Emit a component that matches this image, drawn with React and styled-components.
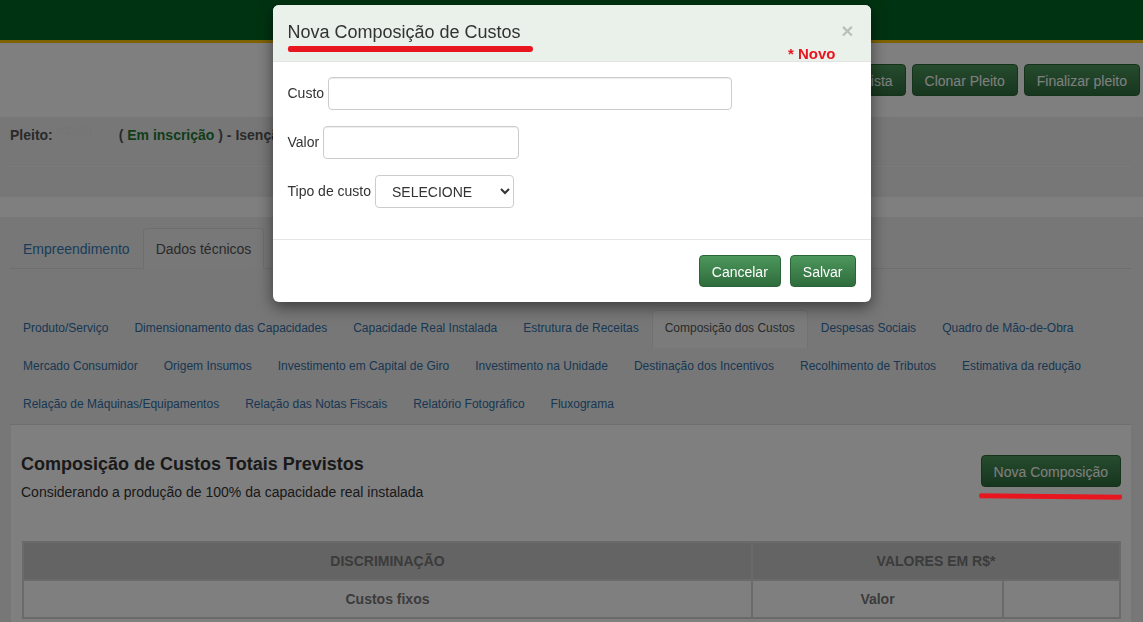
import React from 'react';
import styled, { createGlobalStyle } from 'styled-components';

const GlobalStyle = createGlobalStyle`
  html, body {
    margin: 0;
    padding: 0;
    background: #fff;
  }
  body {
    font-family: "Liberation Sans", Arial, sans-serif;
    font-size: 14px;
    color: #333;
  }
  * { box-sizing: border-box; }
`;

const topTabs = [
  'Empreendimento',
  'Dados técnicos',
  'Informações gerais',
  'Documentação',
  'Análise técnica',
  'Pendências',
  'Finalização',
];

const subTabRows = [
  ['Produto/Serviço', 'Dimensionamento das Capacidades', 'Capacidade Real Instalada', 'Estrutura de Receitas', 'Composição dos Custos', 'Despesas Sociais', 'Quadro de Mão-de-Obra'],
  ['Mercado Consumidor', 'Origem Insumos', 'Investimento em Capital de Giro', 'Investimento na Unidade', 'Destinação dos Incentivos', 'Recolhimento de Tributos', 'Estimativa da redução'],
  ['Relação de Máquinas/Equipamentos', 'Relação das Notas Fiscais', 'Relatório Fotográfico', 'Fluxograma'],
];

function App() {
  return (
    <>
      <GlobalStyle />
      <Page>
        <TopBar />
        <ActionBar>
          <GreenButton>Voltar para a lista</GreenButton>
          <GreenButton>Clonar Pleito</GreenButton>
          <GreenButton>Finalizar pleito</GreenButton>
        </ActionBar>

        <InfoBand>
          <InfoRow>
            <InfoText>
              Pleito: <Redacted>0000/21</Redacted>( <Status>Em inscrição</Status> ) - Isenção
            </InfoText>
          </InfoRow>
        </InfoBand>

        <Panel>
          <Tabs>
            {topTabs.map((t) => (
              <Tab key={t} $active={t === 'Dados técnicos'}>{t}</Tab>
            ))}
          </Tabs>

          <SubTabs>
            {subTabRows.map((row, i) => (
              <SubTabRow key={i}>
                {row.map((t) => (
                  <SubTab key={t} $active={t === 'Composição dos Custos'}>{t}</SubTab>
                ))}
              </SubTabRow>
            ))}
          </SubTabs>

          <Card>
            <CardHead>
              <div>
                <CardTitle>Composição de Custos Totais Previstos</CardTitle>
                <CardSubtitle>Considerando a produção de 100% da capacidade real instalada</CardSubtitle>
              </div>
              <ButtonWrap>
                <GreenButton>Nova Composição</GreenButton>
                <Scribble />
              </ButtonWrap>
            </CardHead>

            <CostTable>
              <tbody>
                <tr>
                  <HeadCell style={{ width: 729 }}>DISCRIMINAÇÃO</HeadCell>
                  <HeadCell colSpan={2}>VALORES EM R$*</HeadCell>
                </tr>
                <tr>
                  <Cell>Custos fixos</Cell>
                  <Cell style={{ width: 251 }}>Valor</Cell>
                  <Cell />
                </tr>
              </tbody>
            </CostTable>
          </Card>
        </Panel>
      </Page>

      <Backdrop />

      <ModalLayer>
        <Dialog>
          <DialogHeader>
            <DialogTitle>
              Nova Composição de Custos
              <TitleMark />
            </DialogTitle>
            <HeaderSide>
              <Close>×</Close>
              <NewTag>* Novo</NewTag>
            </HeaderSide>
          </DialogHeader>

          <DialogBody>
            <FormRow>
              <Label>Custo</Label>
              <Input $w={404} />
            </FormRow>
            <FormRow>
              <Label>Valor</Label>
              <Input $w={196} />
            </FormRow>
            <FormRow>
              <Label>Tipo de custo</Label>
              <Select defaultValue="">
                <option value="">SELECIONE</option>
                <option value="fixo">FIXO</option>
                <option value="variavel">VARIÁVEL</option>
              </Select>
            </FormRow>
          </DialogBody>

          <DialogFooter>
            <GreenButton>Cancelar</GreenButton>
            <GreenButton>Salvar</GreenButton>
          </DialogFooter>
        </Dialog>
      </ModalLayer>
    </>
  );
}

export default App;

const Page = styled.div`
  min-height: 622px;
  background: #fff;
`;

const TopBar = styled.div`
  height: 43px;
  background: #006622;
  border-bottom: 3px solid #ffc400;
`;

const ActionBar = styled.div`
  height: 74px;
  display: flex;
  justify-content: flex-end;
  align-items: flex-start;
  gap: 6px;
  padding: 21px 3px 0 0;
`;

const GreenButton = styled.button`
  height: 32px;
  padding: 6px 12px;
  font-family: "Liberation Sans", Arial, sans-serif;
  font-size: 14px;
  line-height: 20px;
  color: #fff;
  background: linear-gradient(#4c975b, #2f6c3d);
  border: 1px solid #2b6437;
  border-radius: 4px;
  cursor: pointer;
  white-space: nowrap;
`;

const InfoBand = styled.div`
  height: 80px;
  background: #eee;
  padding: 0 12px 0 10px;
`;

const InfoRow = styled.div`
  height: 50px;
  padding-top: 8px;
  border-bottom: 1px solid #f6f6f6;
`;

const InfoText = styled.div`
  line-height: 20px;
  font-weight: bold;
  color: #555;
  white-space: nowrap;
`;

const Redacted = styled.span`
  display: inline-block;
  width: 62px;
  color: #e9e9e9;
  font-weight: normal;
  font-size: 10px;
  vertical-align: top;
  line-height: 14px;
`;

const Status = styled.span`
  color: #1f7a35;
`;

const Panel = styled.div`
  margin-top: 20px;
  background: #eee;
  padding: 11px 12px 0 10px;
`;

const Tabs = styled.div`
  display: flex;
  border-bottom: 1px solid #ddd;
  height: 41px;
`;

const Tab = styled.div`
  padding: 10px 12px;
  line-height: 20px;
  height: 41px;
  font-size: 14px;
  color: ${(p) => (p.$active ? '#555' : '#337ab7')};
  background: ${(p) => (p.$active ? '#f0f0f0' : 'transparent')};
  border: 1px solid ${(p) => (p.$active ? '#ddd' : 'transparent')};
  border-bottom-color: transparent;
  border-radius: 4px 4px 0 0;
  white-space: nowrap;
`;

const SubTabs = styled.div`
  margin-top: 41px;
  border-bottom: 1px solid #ddd;
`;

const SubTabRow = styled.div`
  display: flex;
`;

const SubTab = styled.div`
  padding: 9px 12px 11px;
  line-height: 16px;
  height: 38px;
  font-size: 12px;
  color: ${(p) => (p.$active ? '#555' : '#2f6ea8')};
  background: ${(p) => (p.$active ? '#f6f6f6' : 'transparent')};
  border: 1px solid ${(p) => (p.$active ? '#e2e2e2' : 'transparent')};
  border-bottom-color: transparent;
  border-radius: 4px 4px 0 0;
  white-space: nowrap;
`;

const Card = styled.div`
  background: #fff;
  margin-left: 1px;
  padding: 29px 10px 10px;
  min-height: 200px;
`;

const CardHead = styled.div`
  display: flex;
  justify-content: space-between;
  align-items: flex-start;
`;

const CardTitle = styled.div`
  font-size: 18px;
  line-height: 20px;
  font-weight: bold;
  color: #333;
`;

const CardSubtitle = styled.div`
  margin-top: 8px;
  line-height: 20px;
  font-size: 14px;
  color: #333;
`;

const ButtonWrap = styled.div`
  display: flex;
  flex-direction: column;
  align-items: flex-end;
  margin-top: 1px;
`;

const Scribble = styled.div`
  position: relative;
  z-index: 1060;
  width: 143px;
  height: 5px;
  margin-top: 7px;
  margin-right: -1px;
  background: #e8161f;
  border-radius: 3px 2px 3px 4px;
  transform: rotate(0.6deg);
`;

const CostTable = styled.table`
  margin: 39px 0 0 1px;
  width: 1099px;
  border-collapse: collapse;
  border: 2px solid #d4d4d4;
`;

const HeadCell = styled.td`
  height: 38px;
  background: #c8c8c8;
  border: 2px solid #d4d4d4;
  text-align: center;
  font-weight: bold;
  color: #777;
  font-size: 14px;
`;

const Cell = styled.td`
  height: 38px;
  border: 2px solid #d4d4d4;
  text-align: center;
  font-weight: bold;
  color: #777;
  font-size: 14px;
`;

const Backdrop = styled.div`
  position: fixed;
  inset: 0;
  background: rgba(0, 0, 0, 0.5);
  z-index: 1040;
`;

const ModalLayer = styled.div`
  position: fixed;
  inset: 0;
  z-index: 1050;
`;

const Dialog = styled.div`
  width: 598px;
  margin: 5px auto 0;
  background: #fff;
  border-radius: 6px;
  box-shadow: 0 5px 15px rgba(0, 0, 0, 0.5);
  overflow: hidden;
`;

const DialogHeader = styled.div`
  display: flex;
  justify-content: space-between;
  height: 57px;
  padding: 0 17px 0 15px;
  background: #eaf0ea;
  border-bottom: 1px solid #e3e3e3;
`;

const DialogTitle = styled.div`
  position: relative;
  padding-top: 16px;
  font-size: 18px;
  line-height: 22px;
  color: #333;
`;

const TitleMark = styled.div`
  position: absolute;
  left: 0;
  top: 41px;
  width: 245px;
  height: 6px;
  background: #e8161f;
  border-radius: 3px 4px 4px 3px;
`;

const HeaderSide = styled.div`
  display: flex;
  flex-direction: column;
  align-items: flex-end;
  padding-top: 15px;
`;

const Close = styled.span`
  font-size: 21px;
  font-weight: bold;
  line-height: 1;
  color: #000;
  opacity: 0.2;
`;

const NewTag = styled.span`
  margin: 4px 18px 0 0;
  font-size: 15px;
  font-weight: bold;
  line-height: 18px;
  color: #e8161f;
`;

const DialogBody = styled.div`
  padding: 15px 15px 15px;
`;

const FormRow = styled.div`
  display: flex;
  align-items: center;
  gap: 4px;
  margin-bottom: 16px;
`;

const Label = styled.label`
  font-size: 14px;
  color: #333;
  margin-bottom: 2px;
`;

const Input = styled.input`
  width: ${(p) => p.$w}px;
  height: 33px;
  padding: 6px 12px;
  font-size: 14px;
  border: 1px solid #ccc;
  border-radius: 4px;
  box-shadow: inset 0 1px 1px rgba(0, 0, 0, 0.075);
`;

const Select = styled.select`
  width: 139px;
  height: 33px;
  padding: 6px 8px 6px 12px;
  font-family: "Liberation Sans", Arial, sans-serif;
  font-size: 14px;
  color: #333;
  background: #fff;
  border: 1px solid #ccc;
  border-radius: 4px;
`;

const DialogFooter = styled.div`
  display: flex;
  justify-content: flex-end;
  gap: 9px;
  padding: 15px;
  border-top: 1px solid #e5e5e5;
`;
